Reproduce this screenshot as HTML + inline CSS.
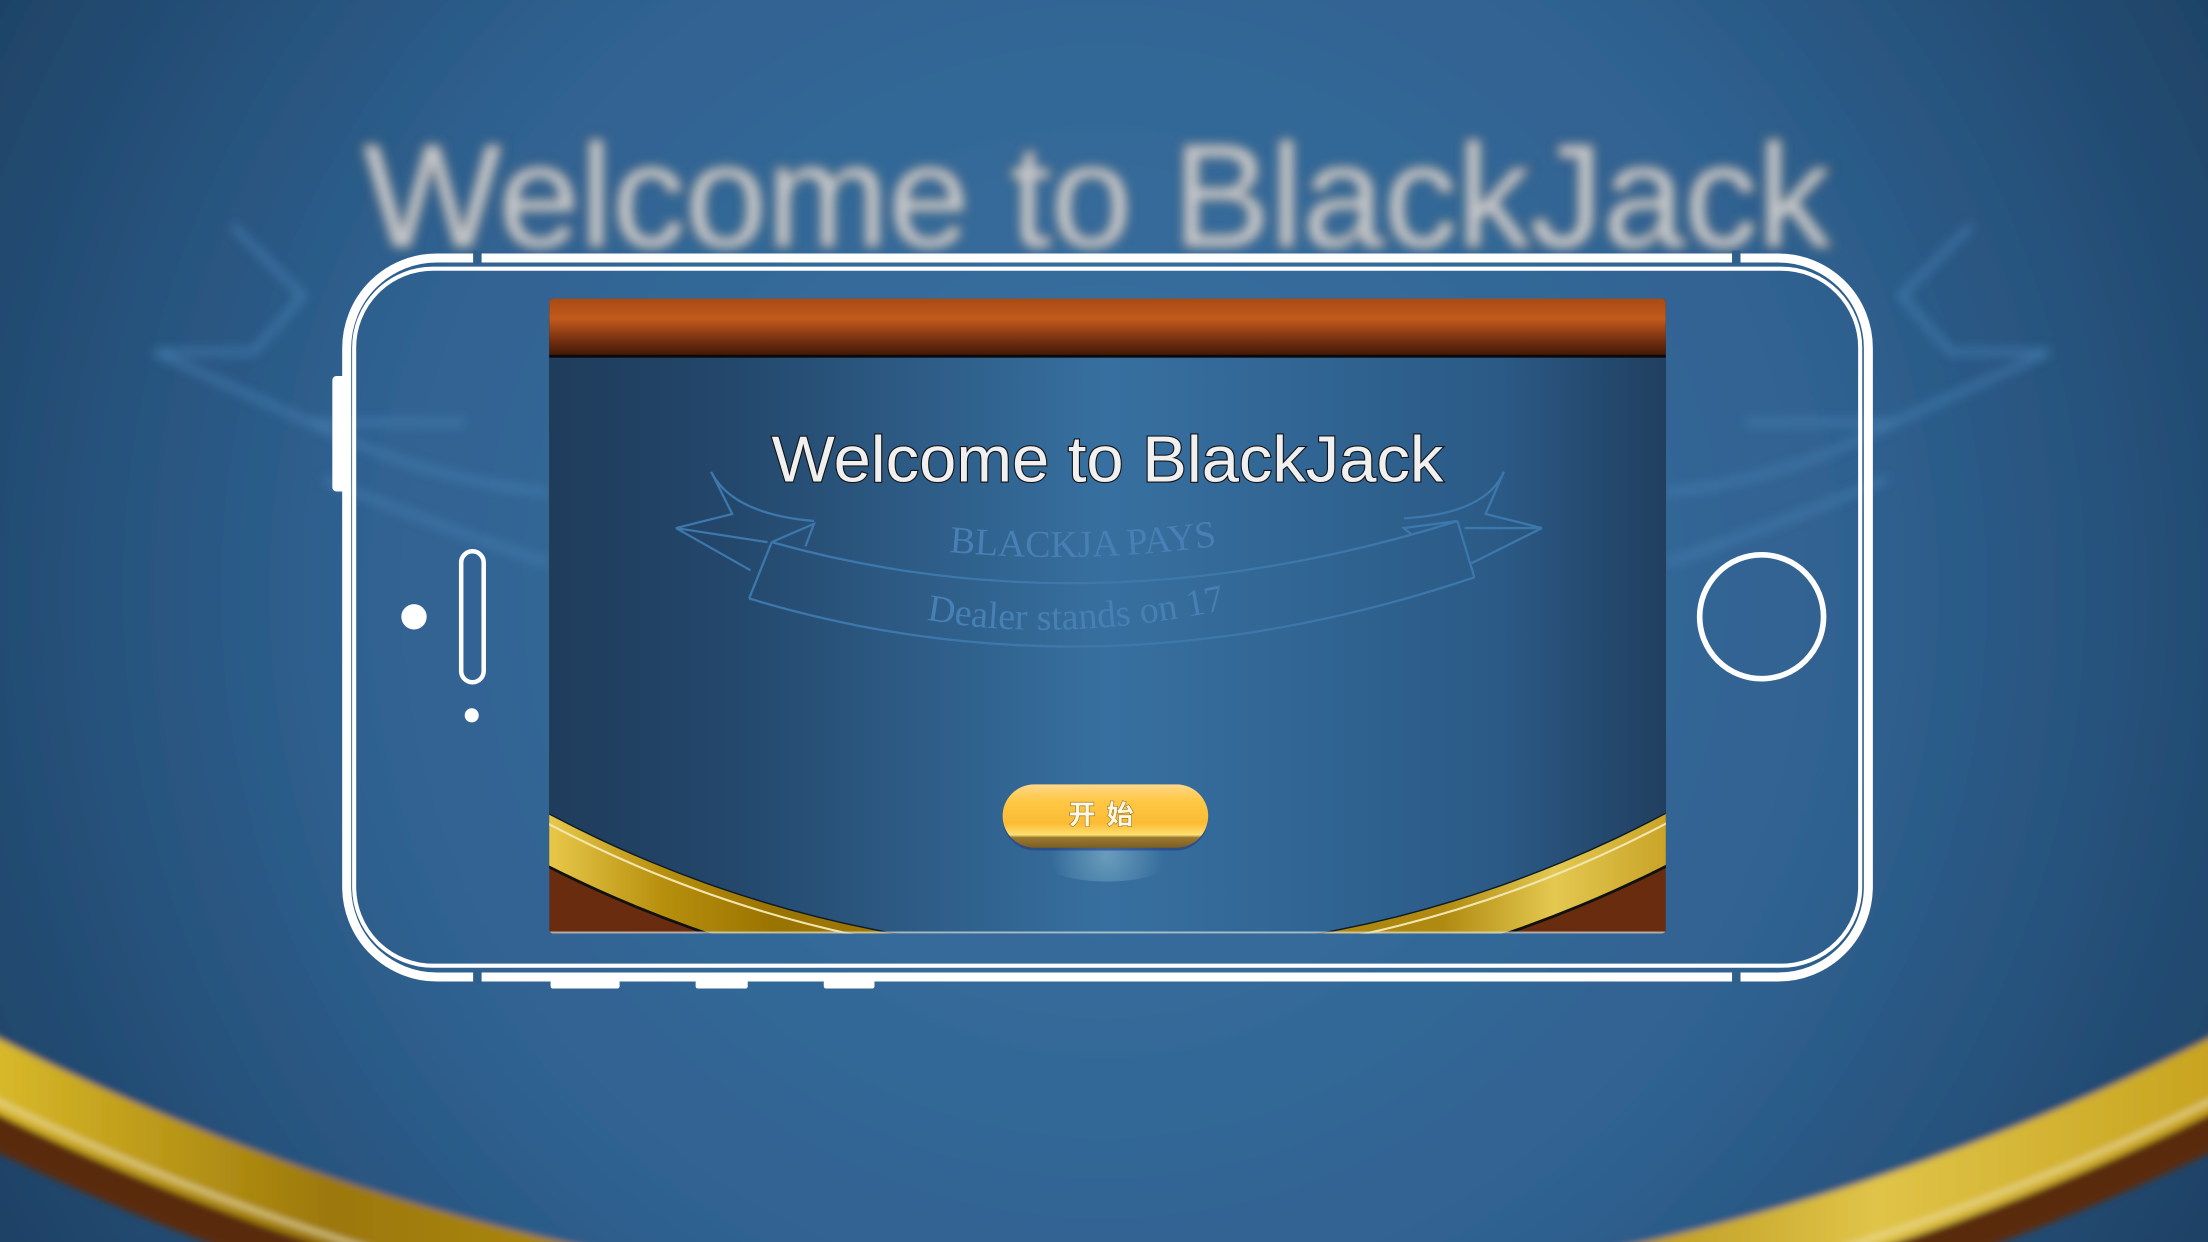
<!DOCTYPE html>
<html><head><meta charset="utf-8"><style>
html,body{margin:0;padding:0;width:2208px;height:1242px;overflow:hidden;background:#2b5a85}
svg{display:block;position:absolute;left:0;top:0}
</style></head><body>
<svg width="2208" height="1242" viewBox="0 0 1568 882" xmlns="http://www.w3.org/2000/svg">
<defs>
 <radialGradient id="bg" cx="784" cy="420" r="900" gradientUnits="userSpaceOnUse">
  <stop offset="0" stop-color="#3a74a5"/><stop offset="0.6" stop-color="#2f6190"/><stop offset="1" stop-color="#1e4266"/>
 </radialGradient>
 <linearGradient id="felt" x1="390" x2="1183" y1="0" y2="0" gradientUnits="userSpaceOnUse">
  <stop offset="0" stop-color="#1f3c5b"/><stop offset="0.15" stop-color="#23466a"/><stop offset="0.5" stop-color="#3770a0"/><stop offset="0.85" stop-color="#2b5a86"/><stop offset="1" stop-color="#213f60"/>
 </linearGradient>
 <linearGradient id="wood" x1="0" y1="212" x2="0" y2="253" gradientUnits="userSpaceOnUse">
  <stop offset="0" stop-color="#a84a14"/><stop offset="0.35" stop-color="#c25a1c"/><stop offset="0.7" stop-color="#7a3210"/><stop offset="1" stop-color="#3e1606"/>
 </linearGradient>
 <linearGradient id="gold" x1="390" x2="1183" y1="0" y2="0" gradientUnits="userSpaceOnUse">
  <stop offset="0" stop-color="#e8c84a"/><stop offset="0.1" stop-color="#b8900e"/><stop offset="0.2" stop-color="#9a7400"/><stop offset="0.8" stop-color="#b08a10"/><stop offset="0.9" stop-color="#e4c850"/><stop offset="1" stop-color="#c9a428"/>
 </linearGradient>
 <linearGradient id="bgold" x1="0" x2="1568" y1="0" y2="0" gradientUnits="userSpaceOnUse">
  <stop offset="0" stop-color="#d8b82a"/><stop offset="0.15" stop-color="#9c7808"/><stop offset="0.3" stop-color="#b08c14"/><stop offset="0.7" stop-color="#b08c14"/><stop offset="0.85" stop-color="#e0c448"/><stop offset="1" stop-color="#c8a420"/>
 </linearGradient>
 <linearGradient id="btn" x1="0" y1="557" x2="0" y2="603" gradientUnits="userSpaceOnUse">
  <stop offset="0" stop-color="#ffd88a"/><stop offset="0.25" stop-color="#ffc845"/><stop offset="0.6" stop-color="#fbbb34"/><stop offset="0.78" stop-color="#ffe070"/><stop offset="0.82" stop-color="#9a7a30"/><stop offset="1" stop-color="#7a5a20"/>
 </linearGradient>
 <radialGradient id="glow" cx="786" cy="608" r="40" gradientUnits="userSpaceOnUse">
  <stop offset="0" stop-color="#7fb0c8" stop-opacity="0.7"/><stop offset="1" stop-color="#7fb0c8" stop-opacity="0"/>
 </radialGradient>
 <filter id="blur" x="-10%" y="-10%" width="120%" height="120%"><feGaussianBlur stdDeviation="4"/></filter>
 <filter id="blur2" x="-10%" y="-10%" width="120%" height="120%"><feGaussianBlur stdDeviation="2.5"/></filter>
 <clipPath id="scr"><rect x="390" y="212" width="793" height="451" rx="3"/></clipPath>
 <path id="arc2" d="M658,440 Q765,460 905,425"/>
 <path id="arc1" d="M674,392 Q780,402 888,384"/>
</defs>

<!-- background -->
<rect width="1568" height="882" fill="url(#bg)"/>
<g filter="url(#blur2)">
 <circle cx="784" cy="-812" r="1810" fill="#5a2a10"/>
 <circle cx="784" cy="-812" r="1785" fill="url(#bgold)"/>
 <circle cx="784" cy="-812" r="1777" fill="none" stroke="#f0e2a0" stroke-width="2"/>
 <circle cx="784" cy="-812" r="1737" fill="url(#bg)"/>
</g>
<g filter="url(#blur)" fill="none" stroke="#4a83b6" stroke-width="4" opacity="0.8">
 <path d="M165,160 L215,210 L180,250 L110,250 L220,300 L330,300"/>
 <path d="M220,300 Q300,340 390,350"/>
 <path d="M230,340 Q300,370 390,400"/>
 <path d="M1400,160 L1350,210 L1385,250 L1455,250 L1345,300 L1240,300"/>
 <path d="M1345,300 Q1270,340 1183,350"/>
 <path d="M1340,340 Q1270,370 1183,400"/>
</g>
<text x="258" y="175" font-family="Liberation Sans, sans-serif" font-size="104" textLength="1042" lengthAdjust="spacingAndGlyphs" fill="#c4c8cc" stroke="#333" stroke-width="3" paint-order="stroke" filter="url(#blur)">Welcome to BlackJack</text>

<!-- screen -->
<g clip-path="url(#scr)">
 <rect x="390" y="212" width="793" height="451" fill="#6a2c0e"/>
 <circle cx="786" cy="-169" r="880" fill="#111"/>
 <circle cx="786" cy="-169" r="878" fill="url(#gold)"/>
 <circle cx="786" cy="-169" r="852" fill="none" stroke="#f2e6b0" stroke-width="1.5"/>
 <circle cx="786" cy="-169" r="846" fill="#0c1a28"/>
 <circle cx="786" cy="-169" r="845" fill="url(#felt)"/>
 <rect x="390" y="212" width="793" height="41" fill="url(#wood)"/>
 <rect x="390" y="252" width="793" height="2" fill="#0a0a0a"/>
 <rect x="390" y="661.5" width="793" height="1.5" fill="#cfe0ee" opacity="0.7"/>
 <!-- ribbon -->
 <g fill="none" stroke="#3d78ad" stroke-width="1.6">
  <path d="M548,385 Q780,450 1035,370"/>
  <path d="M532,425 Q780,500 1047,410"/>
  <path d="M548,385 L532,425"/>
  <path d="M1035,370 L1047,410"/>
  <path d="M548,385 L578,372 L572,388"/>
  <path d="M1035,370 L997,375 L1003,380"/>
  <path d="M545,385 L480,375 L520,365 L505,335 Q520,365 578,370"/>
  <path d="M533,405 L480,375"/>
  <path d="M1040,375 L1095,375 L1055,365 L1068,335 Q1055,365 997,368"/>
  <path d="M1045,400 L1095,375"/>
 </g>
 <text font-family="Liberation Serif, serif" font-size="27" fill="#4680b5"><textPath href="#arc1">BLACKJA PAYS</textPath></text>
 <text font-family="Liberation Serif, serif" font-size="27" fill="#4680b5"><textPath href="#arc2">Dealer stands on 17</textPath></text>
 <text x="548" y="342" font-family="Liberation Sans, sans-serif" font-size="46" textLength="477" lengthAdjust="spacingAndGlyphs" fill="#f0f0f0" stroke="#151515" stroke-width="1.6" paint-order="stroke">Welcome to BlackJack</text>
 <!-- button -->
 <ellipse cx="786" cy="612" rx="45" ry="14" fill="url(#glow)"/>
 <rect x="712" y="557" width="146" height="47" rx="23" fill="#2a3a80" opacity="0.6"/>
 <rect x="712" y="557" width="146" height="45" rx="22.5" fill="url(#btn)"/>
 <text x="786" y="585" text-anchor="middle" font-family="Liberation Sans, 'Noto Sans CJK SC', sans-serif" font-weight="bold" font-size="19" fill="#fff8e0" stroke="#8a6a20" stroke-width="0.8" paint-order="stroke" letter-spacing="8">开始</text>
</g>

<!-- phone -->
<g fill="none" stroke="#fff">
 <rect x="246.2" y="183.2" width="1080.6" height="510.6" rx="64" stroke-width="6.4"/>
 <rect x="251.5" y="190.8" width="1069.5" height="495" rx="56" stroke-width="2.9"/>
 <rect x="327.5" y="391.5" width="16" height="93" rx="8" stroke-width="3.2"/>
 <circle cx="1251" cy="438" r="44" stroke-width="4"/>
</g>
<rect x="336" y="178" width="6" height="9" fill="#2f5f8b"/>
<rect x="1230" y="178" width="6" height="9" fill="#2f5f8b"/>
<rect x="336" y="689" width="6" height="10" fill="#2f5f8b"/>
<rect x="1230" y="689" width="6" height="10" fill="#2f5f8b"/>
<g fill="#fff">
 <rect x="236" y="267" width="10" height="82" rx="3"/>
 <rect x="391" y="696" width="49" height="6" rx="1.5"/>
 <rect x="494" y="696" width="37" height="6" rx="1.5"/>
 <rect x="585" y="696" width="36" height="6" rx="1.5"/>
 <circle cx="294" cy="438" r="9"/>
 <circle cx="335" cy="508" r="5"/>
</g>
</svg>
</body></html>
